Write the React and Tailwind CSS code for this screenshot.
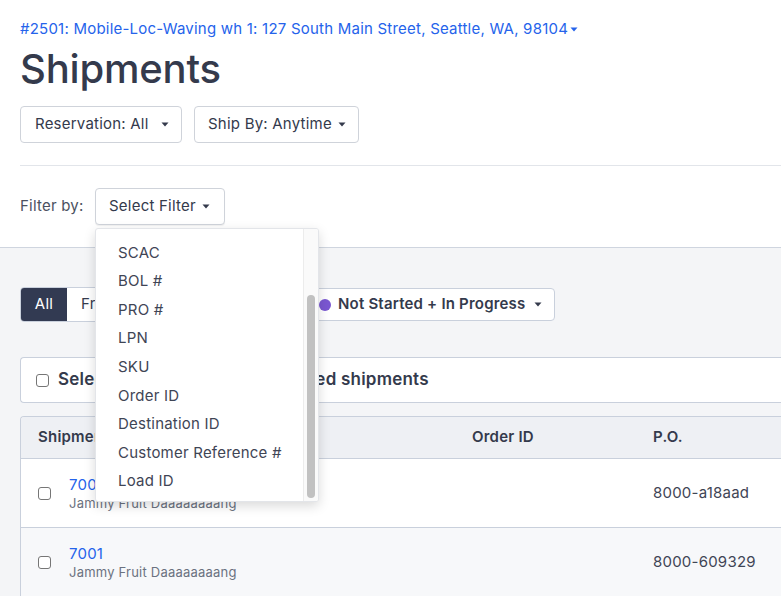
import React from "react";

const filterOptions = [
    "P.O.",
    "SCAC",
    "BOL #",
    "PRO #",
    "LPN",
    "SKU",
    "Order ID",
    "Destination ID",
    "Customer Reference #",
    "Load ID",
];

const shipments = [
    { id: "7000", customer: "Jammy Fruit Daaaaaaaang", orderId: "", po: "8000-a18aad" },
    { id: "7001", customer: "Jammy Fruit Daaaaaaaang", orderId: "", po: "8000-609329" },
];

const Caret = ({ className = "" }) => (
    <svg width="8" height="5" viewBox="0 0 8 5" className={className}>
        <path d="M0.5 0.5h7L4 4.5z" fill="currentColor" />
    </svg>
);

const CheckBox = () => (
    <span className="inline-block h-[13px] w-[13px] shrink-0 rounded-[3px] border border-[#767676] bg-white" />
);

const App = () => {
    return (
        <div
            className="min-h-[596px] w-[781px] overflow-hidden bg-[#f4f5f7] text-[15px] tracking-[0.22px] text-[#343a4c]"
            style={{ fontFamily: "Inter, 'Noto Sans', sans-serif" }}
        >
            {/* header */}
            <div className="relative border-b border-[#cfd5df] bg-white pl-5 pt-[19px] pb-[22px]">
                <div className="flex items-center text-[15px] leading-5 text-[#2563eb]">
                    #2501: Mobile-Loc-Waving wh 1: 127 South Main Street, Seattle, WA, 98104
                    <Caret className="ml-[2px] mt-[1px]" />
                </div>
                <h1 className="mt-[6px] text-[40px] font-medium leading-[48px] tracking-[-0.2px] text-[#343a4c]">
                    Shipments
                </h1>
                <div className="mt-[13px] flex gap-3">
                    <button className="flex h-[37px] w-[162px] items-center rounded border border-[#cfd3da] bg-white pl-[14px] text-[#343a4c]">
                        Reservation: All
                        <Caret className="ml-[12px]" />
                    </button>
                    <button className="flex h-[37px] w-[165px] items-center rounded border border-[#cfd3da] bg-white pl-[13px] text-[#343a4c]">
                        Ship By: Anytime
                        <Caret className="ml-[6px]" />
                    </button>
                </div>
                <div className="mt-[22px] border-t border-[#e2e5ea]" />
                <div className="mt-[22px] flex items-center">
                    <span className="w-[75px] text-[#4b5161]">Filter by:</span>
                    <button className="flex h-[37px] w-[130px] items-center rounded border border-[#cfd3da] bg-white pl-[13px] text-[#343a4c] shadow-[0_1px_1px_rgba(0,0,0,0.06)]">
                        Select Filter
                        <Caret className="ml-[6px]" />
                    </button>
                </div>

                {/* open filter menu */}
                <div className="absolute left-[95px] top-[228px] z-10 flex h-[274px] w-[224px] overflow-hidden rounded-[3px] border border-[#e3e5e9] bg-white shadow-[0_4px_12px_rgba(0,0,0,0.15)]">
                    <div className="flex-1 overflow-hidden">
                        <div className="-mt-[19px]">
                            {filterOptions.map((opt) => (
                                <div key={opt} className="flex h-[28.6px] items-center pl-[22px] text-[#3f4555]">
                                    {opt}
                                </div>
                            ))}
                        </div>
                    </div>
                    <div className="w-[15px] border-l border-[#ececec] bg-[#fafafa] pl-[3px] pt-[66px] pb-[4px]">
                        <div className="h-[203px] w-[8px] rounded bg-[#c1c1c1]" />
                    </div>
                </div>
            </div>

            {/* body */}
            <div className="pl-5 pt-[39px]">
                <div className="flex items-center">
                    <div className="flex h-[35px] overflow-hidden rounded border border-[#c9d0dc] bg-white">
                        <div className="flex w-[46px] items-center justify-center bg-[#323a52] text-white">All</div>
                        <div className="flex w-[80px] items-center pl-[14px] text-[#343a4c]">Freight</div>
                        <div className="flex w-[80px] items-center border-l border-[#c9d0dc] pl-[14px]">Parcel</div>
                        <div className="flex w-[66px] items-center border-l border-[#c9d0dc] pl-[14px]">LTL</div>
                    </div>
                    <button className="ml-[12px] flex h-[33px] items-center rounded border border-[#c9d0dc] bg-white pl-[12px] pr-[12px] font-semibold tracking-[0.2px] text-[#343a4c]">
                        <span className="mr-[7px] h-[12px] w-[12px] rounded-full bg-[#7a57d1]" />
                        Not Started + In Progress
                        <Caret className="ml-[8px]" />
                    </button>
                </div>

                <div className="mt-[35px] flex h-[46px] items-center rounded-l border border-r-0 border-[#c9d0dc] bg-white pl-[15px] text-[17px] font-semibold">
                    <CheckBox />
                    <span className="ml-[9px]">Select All</span>
                    <span className="ml-[74px]">0 of 2 selected shipments</span>
                </div>

                <div className="mt-[13px] overflow-hidden rounded-tl border border-r-0 border-[#c9d0dc]">
                    <div className="grid h-[41px] grid-cols-[434px_181px_1fr] items-center bg-[#eef0f4] pl-[17px] font-semibold">
                        <span>Shipment</span>
                        <span>Order ID</span>
                        <span>P.O.</span>
                    </div>
                    {shipments.map((s, i) => (
                        <div
                            key={s.id}
                            className={`grid h-[69px] grid-cols-[434px_181px_1fr] items-center border-t border-[#c9d0dc] pl-[17px] ${
                                i % 2 === 0 ? "bg-white" : "bg-[#f7f8fa]"
                            }`}
                        >
                            <div className="flex items-center">
                                <CheckBox />
                                <div className="ml-[18px] mt-[-1px] flex flex-col">
                                    <a className="leading-5 text-[#2563eb]">{s.id}</a>
                                    <span className="text-[13px] leading-4 text-[#6b7280]">{s.customer}</span>
                                </div>
                            </div>
                            <span>{s.orderId}</span>
                            <span className="text-[#3f4555]">{s.po}</span>
                        </div>
                    ))}
                </div>
            </div>
        </div>
    );
};

export default App;
